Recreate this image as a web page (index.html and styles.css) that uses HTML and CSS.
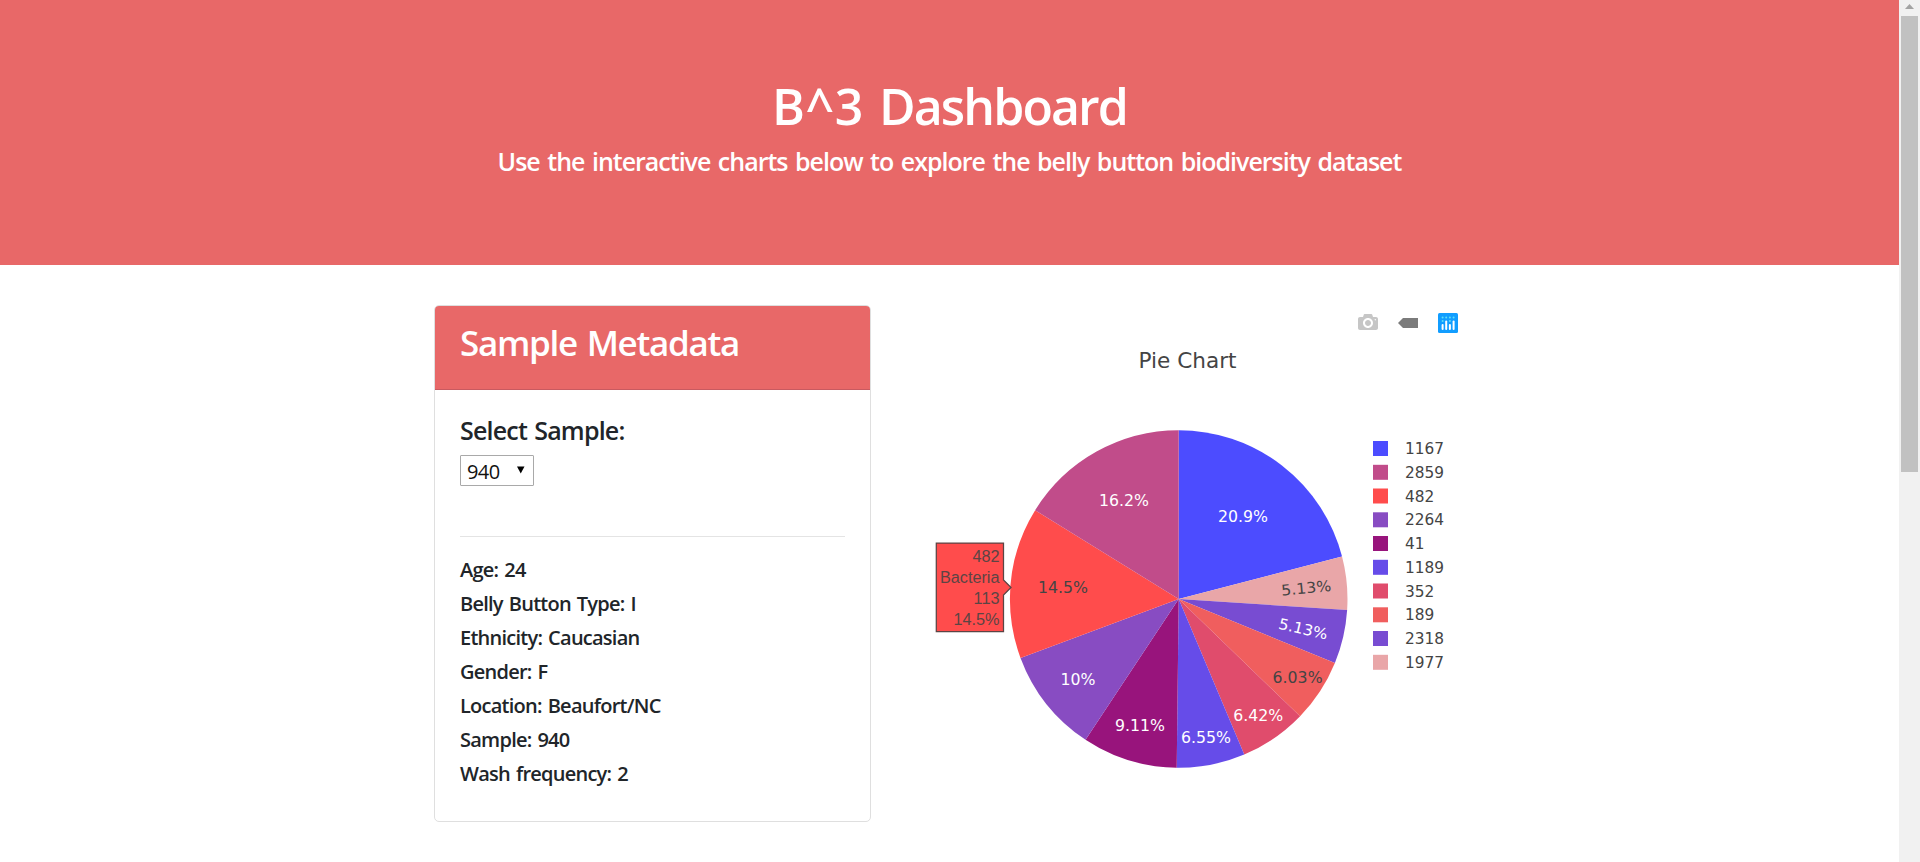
FILE: index.html
```html
<!DOCTYPE html>
<html lang="en">
<head>
<meta charset="utf-8">
<title>B^3 Dashboard</title>
<link rel="stylesheet" href="styles.css">
</head>
<body>
<div class="page">
  <header class="jumbotron">
    <h1><span class="loose">B^3</span> Dashboard</h1>
    <h5>Use the interactive charts below to explore the belly button biodiversity dataset</h5>
  </header>
  <main class="row">
    <section class="card">
      <div class="card-header"><h3>Sample Metadata</h3></div>
      <div class="card-body">
        <h5>Select Sample:</h5>
        <div class="select"><span>940</span><svg width="8" height="8" viewBox="0 0 8 8"><path d="M0 0.5h7.5L3.75 7.5z"/></svg></div>
        <hr>
        <ul class="meta">
          <li>Age: 24</li>
          <li>Belly Button Type: I</li>
          <li>Ethnicity: Caucasian</li>
          <li>Gender: F</li>
          <li>Location: Beaufort/NC</li>
          <li>Sample: 940</li>
          <li>Wash frequency: 2</li>
        </ul>
      </div>
    </section>
    <svg class="chart" viewBox="900 290 600 520" width="600" height="520">
      <svg x="1358" y="312" width="20" height="20" viewBox="0 0 1000 1000"><path class="icon-camera" transform="matrix(1 0 0 -1 0 850)" d="m500 450c-83 0-150-67-150-150 0-83 67-150 150-150 83 0 150 67 150 150 0 83-67 150-150 150z m400 150h-120c-16 0-34 13-39 29l-31 93c-6 15-23 28-40 28h-340c-16 0-34-13-39-28l-31-94c-6-15-23-28-40-28h-120c-55 0-100-45-100-100v-450c0-55 45-100 100-100h800c55 0 100 45 100 100v450c0 55-45 100-100 100z m-400-550c-138 0-250 112-250 250 0 138 112 250 250 250 138 0 250-112 250-250 0-138-112-250-250-250z m365 380c-19 0-35 16-35 35 0 19 16 35 35 35 19 0 35-16 35-35 0-19-16-35-35-35z"/></svg>
      <path class="icon-tag" d="M1403 318h15v10h-15l-5-5z"/>
      <g transform="translate(1438 313)">
        <rect class="icon-logo" width="20" height="20" rx="1.5"/>
        <g class="logo-bars">
          <rect x="3.6" y="11" width="2" height="6" rx="1"/><rect x="7.2" y="7.5" width="2" height="9.5" rx="1"/><rect x="10.9" y="11" width="2" height="6" rx="1"/><rect x="14.6" y="7.5" width="2" height="9.5" rx="1"/>
        </g>
        <g class="logo-dots">
          <circle cx="4.6" cy="4.5" r="1"/><circle cx="8.2" cy="4.5" r="1"/><circle cx="11.9" cy="4.5" r="1"/><circle cx="15.6" cy="4.5" r="1"/><circle cx="4.6" cy="8" r="1"/><circle cx="11.9" cy="8" r="1"/>
        </g>
      </g>

      <text class="chart-title" x="1138.5" y="367.5" textLength="98" lengthAdjust="spacingAndGlyphs">Pie Chart</text>

      <g class="slices" transform="rotate(-90 1178.7 599)">
        <circle class="c1167" cx="1178.7" cy="599" r="84.4" pathLength="779" stroke-dasharray="163 616"/>
        <circle class="c1977" cx="1178.7" cy="599" r="84.4" pathLength="779" stroke-dasharray="40 739" stroke-dashoffset="-163"/>
        <circle class="c2318" cx="1178.7" cy="599" r="84.4" pathLength="779" stroke-dasharray="40 739" stroke-dashoffset="-203"/>
        <circle class="c189" cx="1178.7" cy="599" r="84.4" pathLength="779" stroke-dasharray="47 732" stroke-dashoffset="-243"/>
        <circle class="c352" cx="1178.7" cy="599" r="84.4" pathLength="779" stroke-dasharray="50 729" stroke-dashoffset="-290"/>
        <circle class="c1189" cx="1178.7" cy="599" r="84.4" pathLength="779" stroke-dasharray="51 728" stroke-dashoffset="-340"/>
        <circle class="c41" cx="1178.7" cy="599" r="84.4" pathLength="779" stroke-dasharray="71 708" stroke-dashoffset="-391"/>
        <circle class="c2264" cx="1178.7" cy="599" r="84.4" pathLength="779" stroke-dasharray="78 701" stroke-dashoffset="-462"/>
        <circle class="c482" cx="1178.7" cy="599" r="84.4" pathLength="779" stroke-dasharray="113 666" stroke-dashoffset="-540"/>
        <circle class="c2859" cx="1178.7" cy="599" r="84.4" pathLength="779" stroke-dasharray="126 653" stroke-dashoffset="-653"/>
      </g>

      <g class="labels">
        <text x="1243" y="522" textLength="50" lengthAdjust="spacingAndGlyphs">20.9%</text>
        <text x="1124" y="506" textLength="50" lengthAdjust="spacingAndGlyphs">16.2%</text>
        <text class="dark" x="1063" y="593" textLength="50" lengthAdjust="spacingAndGlyphs">14.5%</text>
        <text x="1078" y="685" textLength="35" lengthAdjust="spacingAndGlyphs">10%</text>
        <text x="1140" y="731" textLength="50" lengthAdjust="spacingAndGlyphs">9.11%</text>
        <text x="1206" y="743" textLength="50" lengthAdjust="spacingAndGlyphs">6.55%</text>
        <text x="1258.3" y="721" textLength="50" lengthAdjust="spacingAndGlyphs">6.42%</text>
        <text class="dark" x="1297.6" y="683" textLength="50" lengthAdjust="spacingAndGlyphs">6.03%</text>
        <text class="dark" transform="translate(1306.7 593.3) rotate(-5.4)" textLength="50" lengthAdjust="spacingAndGlyphs">5.13%</text>
        <text transform="translate(1302 634) rotate(13)" textLength="50" lengthAdjust="spacingAndGlyphs">5.13%</text>
      </g>

      <g class="legend">
        <rect class="c1167" x="1373" y="441" width="15" height="15"/><text x="1405" y="454" textLength="39" lengthAdjust="spacingAndGlyphs">1167</text>
        <rect class="c2859" x="1373" y="464.8" width="15" height="15"/><text x="1405" y="477.8" textLength="39" lengthAdjust="spacingAndGlyphs">2859</text>
        <rect class="c482" x="1373" y="488.5" width="15" height="15"/><text x="1405" y="501.5" textLength="29.3" lengthAdjust="spacingAndGlyphs">482</text>
        <rect class="c2264" x="1373" y="512.3" width="15" height="15"/><text x="1405" y="525.3" textLength="39" lengthAdjust="spacingAndGlyphs">2264</text>
        <rect class="c41" x="1373" y="536" width="15" height="15"/><text x="1405" y="549" textLength="19.5" lengthAdjust="spacingAndGlyphs">41</text>
        <rect class="c1189" x="1373" y="559.8" width="15" height="15"/><text x="1405" y="572.8" textLength="39" lengthAdjust="spacingAndGlyphs">1189</text>
        <rect class="c352" x="1373" y="583.5" width="15" height="15"/><text x="1405" y="596.5" textLength="29.3" lengthAdjust="spacingAndGlyphs">352</text>
        <rect class="c189" x="1373" y="607.3" width="15" height="15"/><text x="1405" y="620.3" textLength="29.3" lengthAdjust="spacingAndGlyphs">189</text>
        <rect class="c2318" x="1373" y="631" width="15" height="15"/><text x="1405" y="644" textLength="39" lengthAdjust="spacingAndGlyphs">2318</text>
        <rect class="c1977" x="1373" y="654.8" width="15" height="15"/><text x="1405" y="667.8" textLength="39" lengthAdjust="spacingAndGlyphs">1977</text>
      </g>

      <g class="hover">
        <path d="M1011 587.5l-7.5-7.5v-37h-67.2v88.6h67.2v-36.6z"/>
        <text x="999.5" y="562">482</text>
        <text x="999.5" y="583">Bacteria</text>
        <text x="999.5" y="604">113</text>
        <text x="999.5" y="625">14.5%</text>
      </g>
    </svg>
  </main>
</div>
<aside class="scrollbar">
  <svg width="21" height="16" viewBox="0 0 21 16"><path d="M6 9l4.5-5L15 9z"/></svg>
  <div class="thumb"></div>
</aside>
</body>
</html>
```
FILE: styles.css
```css
* { box-sizing: border-box; }
html, body { height: 100%; margin: 0; overflow: hidden; }
body {
  display: flex;
  background: #fff;
  color: #212529;
  font-family: "Open Sans", "Noto Sans", sans-serif;
  font-size: 20px;
}
h1, h3, h5, ul { margin: 0; padding: 0; font-weight: 600; line-height: 1.2; }
.page { flex: 1; min-width: 0; }

.jumbotron {
  height: 265px;
  padding-top: 76px;
  background: #e86868;
  color: #fff;
  text-align: center;
}
.jumbotron h1 { font-size: 50px; margin-bottom: 10px; letter-spacing: -1.9px; word-spacing: 4px; white-space: nowrap; }
.loose { letter-spacing: 0.6px; }
.jumbotron h5 { font-size: 25px; letter-spacing: -1px; word-spacing: 2px; white-space: nowrap; }

.row { display: flex; align-items: flex-start; padding-left: 434px; }
.card {
  width: 437px;
  height: 517px;
  margin-top: 40px;
  border: 1px solid #dfdfdf;
  border-radius: 5px;
  overflow: hidden;
}
.card-header {
  height: 84px;
  padding: 16px 25px 0;
  background: #e86868;
  border-bottom: 1px solid #c85a60;
  color: #fff;
}
.card-header h3 { font-size: 35px; letter-spacing: -1.3px; word-spacing: 2px; }
.card-body { padding: 25px 25px 0; }
.card-body h5 { font-size: 25px; letter-spacing: -0.8px; word-spacing: 1.5px; margin-bottom: 10px; }
.select {
  display: flex;
  align-items: center;
  justify-content: space-between;
  width: 74px;
  height: 31px;
  padding: 2px 8px 0 6px;
  border: 1px solid #a9a9a9;
  border-radius: 1px;
  color: #111;
  letter-spacing: -0.6px;
}
.select svg { margin-top: -4px; }
hr { margin: 50px 0 21px; border: 0; border-top: 1px solid #e4e4e4; }
.meta { list-style: none; font-size: 20px; letter-spacing: -0.75px; word-spacing: 1.5px; }
.meta li { height: 24px; margin-bottom: 10px; }

.chart { display: block; margin: 25px 0 0 29px; font-family: "DejaVu Sans", sans-serif; }
.chart-title { font-size: 21.25px; fill: #444; }
.icon-camera { fill: #c6c6c6; }
.icon-tag { fill: #7b7b7b; }
.icon-logo { fill: #119dff; }
.logo-bars { fill: #fff; }
.logo-dots { fill: #5fe0f5; }
.slices circle { fill: none; stroke-width: 168.8; }
.labels { fill: #fff; font-size: 15px; text-anchor: middle; }
.dark { fill: #444; }
.legend { fill: #444; font-size: 15px; }
.c1167 { stroke: #4c4cff; fill: #4c4cff; }
.c2859 { stroke: #c14c8a; fill: #c14c8a; }
.c482 { stroke: #ff4c4c; fill: #ff4c4c; }
.c2264 { stroke: #884cc2; fill: #884cc2; }
.c41 { stroke: #98147c; fill: #98147c; }
.c1189 { stroke: #664ce9; fill: #664ce9; }
.c352 { stroke: #e04c6c; fill: #e04c6c; }
.c189 { stroke: #f05e5e; fill: #f05e5e; }
.c2318 { stroke: #784cd2; fill: #784cd2; }
.c1977 { stroke: #e9a6a8; fill: #e9a6a8; }
.legend rect { stroke: none; }
.hover path { fill: #ff4c4c; stroke: #5c4444; stroke-width: 1.25; }
.hover text { fill: #5c4444; font: 16.25px "Liberation Sans", sans-serif; text-anchor: end; }

.scrollbar { width: 21px; background: #f1f1f1; }
.scrollbar svg { display: block; fill: #a3a3a3; }
.thumb { width: 17px; height: 456px; margin-left: 2px; background: #c1c1c1; }
```
